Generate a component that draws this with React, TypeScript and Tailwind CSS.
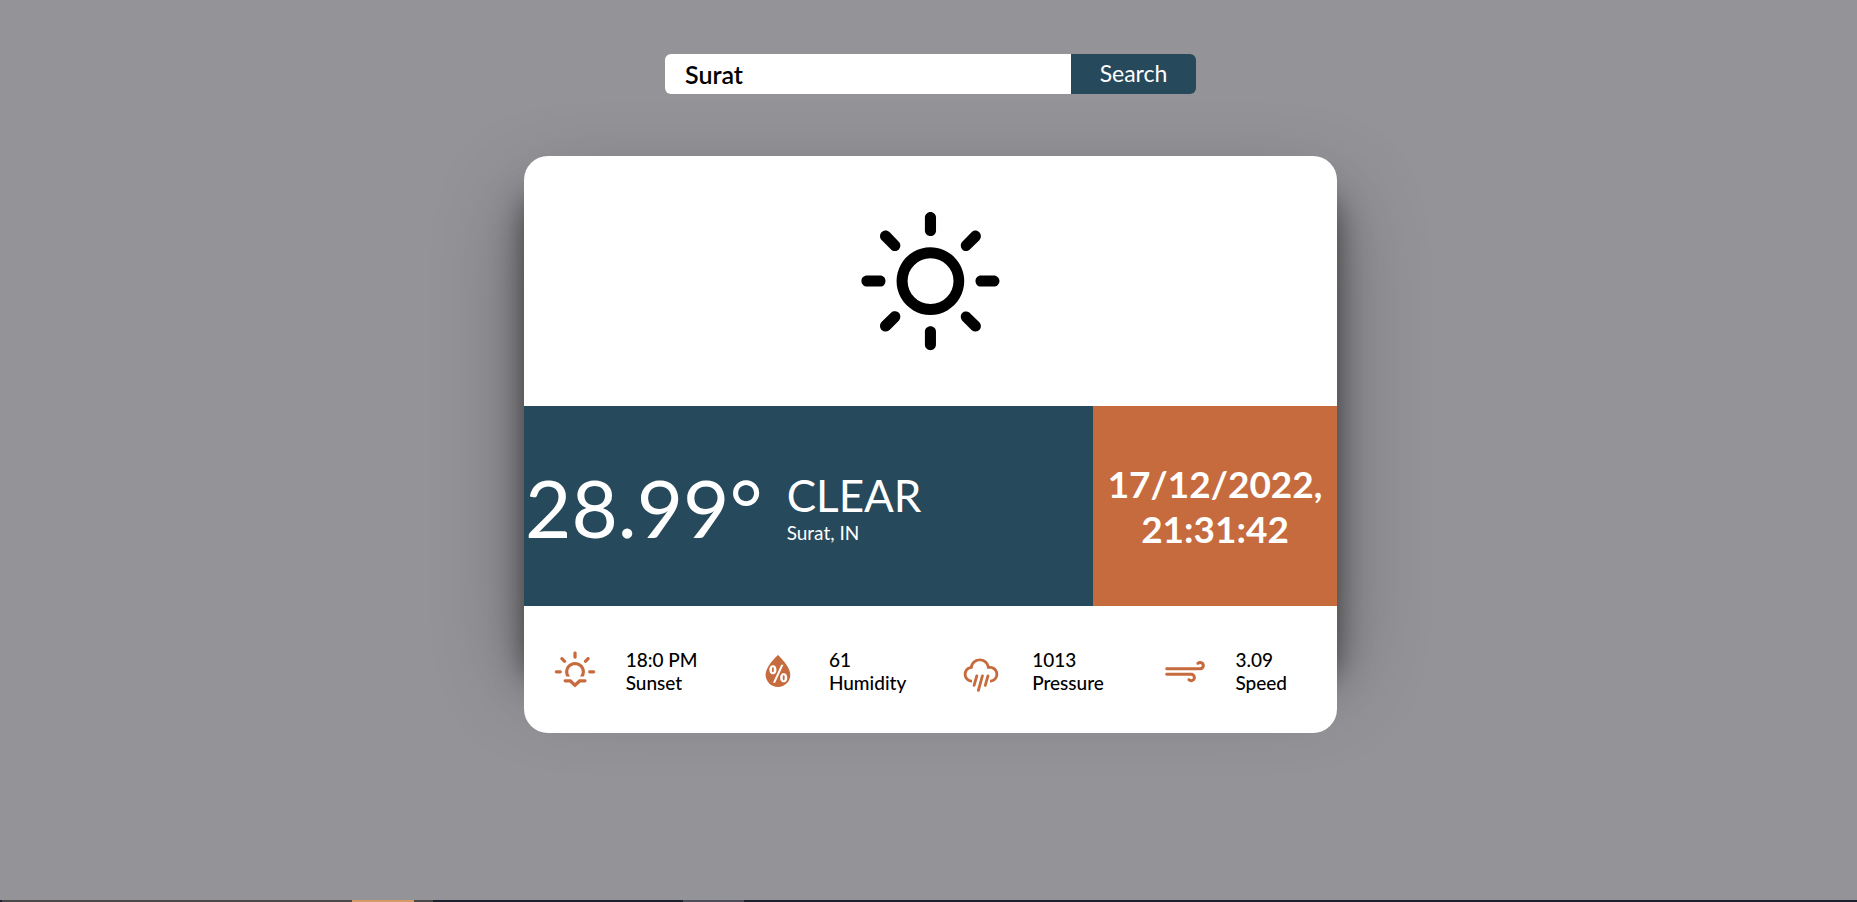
import { WiDaySunny, WiHumidity, WiRain, WiStrongWind, WiSunset } from "react-icons/wi";

const stats = [
  { icon: WiSunset, value: "18:0 PM", label: "Sunset" },
  { icon: WiHumidity, value: "61", label: "Humidity" },
  { icon: WiRain, value: "1013", label: "Pressure" },
  { icon: WiStrongWind, value: "3.09", label: "Speed" },
];

export default function App() {
  return (
    <div className="flex min-h-screen flex-col bg-[#949398] font-['Lato',sans-serif] text-black">
      <main className="flex flex-1 flex-col items-center pt-[54px] pl-1">
        <form className="flex h-10" onSubmit={(e) => e.preventDefault()}>
          <input
            type="search"
            aria-label="City"
            defaultValue="Surat"
            className="w-[406px] rounded-l-md bg-white px-5 pt-0.5 text-[25px] font-semibold outline-none"
          />
          <button type="submit" className="w-[125px] rounded-r-md bg-[#27495c] pb-0.5 text-[23px] text-white">
            Search
          </button>
        </form>

        <article className="relative isolate mt-[62px] w-full max-w-[813px]">
          {/* Shadow is cast by a shorter panel, so it is strongest along the sides */}
          <div className="absolute inset-x-0 top-10 bottom-13 -z-10 rounded-3xl shadow-[0_0_90px_rgba(0,0,0,0.32),0_0_30px_rgba(0,0,0,0.5)]" />
          <div className="flex h-[250px] items-center justify-center rounded-t-3xl bg-white pt-1">
            <WiDaySunny className="size-[195px]" />
          </div>
          <div className="flex h-[200px] text-white">
            <div className="flex w-7/10 items-center gap-6 bg-[#27495c] pt-0.5 pl-px">
              <span className="text-[80px] leading-[96px]">28.99°</span>
              <div className="flex flex-col pt-0.5">
                <span className="text-[44px] leading-[48px]">CLEAR</span>
                <span className="text-[19px] leading-[27px]">Surat, IN</span>
              </div>
            </div>
            <div className="flex w-3/10 items-center justify-center bg-[#c66b3d] text-center text-[37px] leading-[45px] font-bold">
              17/12/2022,
              <br />
              21:31:42
            </div>
          </div>
          <ul className="grid h-[127px] grid-cols-4 items-center rounded-b-3xl bg-white pt-0.5">
            {stats.map(({ icon: Icon, value, label }) => (
              <li key={label} className="grid grid-cols-2 items-center">
                <Icon className="size-[50px] justify-self-center text-[#c66b3d]" />
                <p className="text-[19px] leading-[23px] font-medium whitespace-nowrap">
                  {value}
                  <br />
                  {label}
                </p>
              </li>
            ))}
          </ul>
        </article>
      </main>
      <footer className="flex h-0.5 bg-[#1c2130] pl-0.5">
        <div className="w-[350px] bg-[#4a4848]" />
        <div className="w-[62px] bg-[#d69a66]" />
        <div className="w-[19px] bg-[#4a4848]" />
        <div className="ml-[250px] w-[61px] bg-[#4d4e5a]" />
      </footer>
    </div>
  );
}
